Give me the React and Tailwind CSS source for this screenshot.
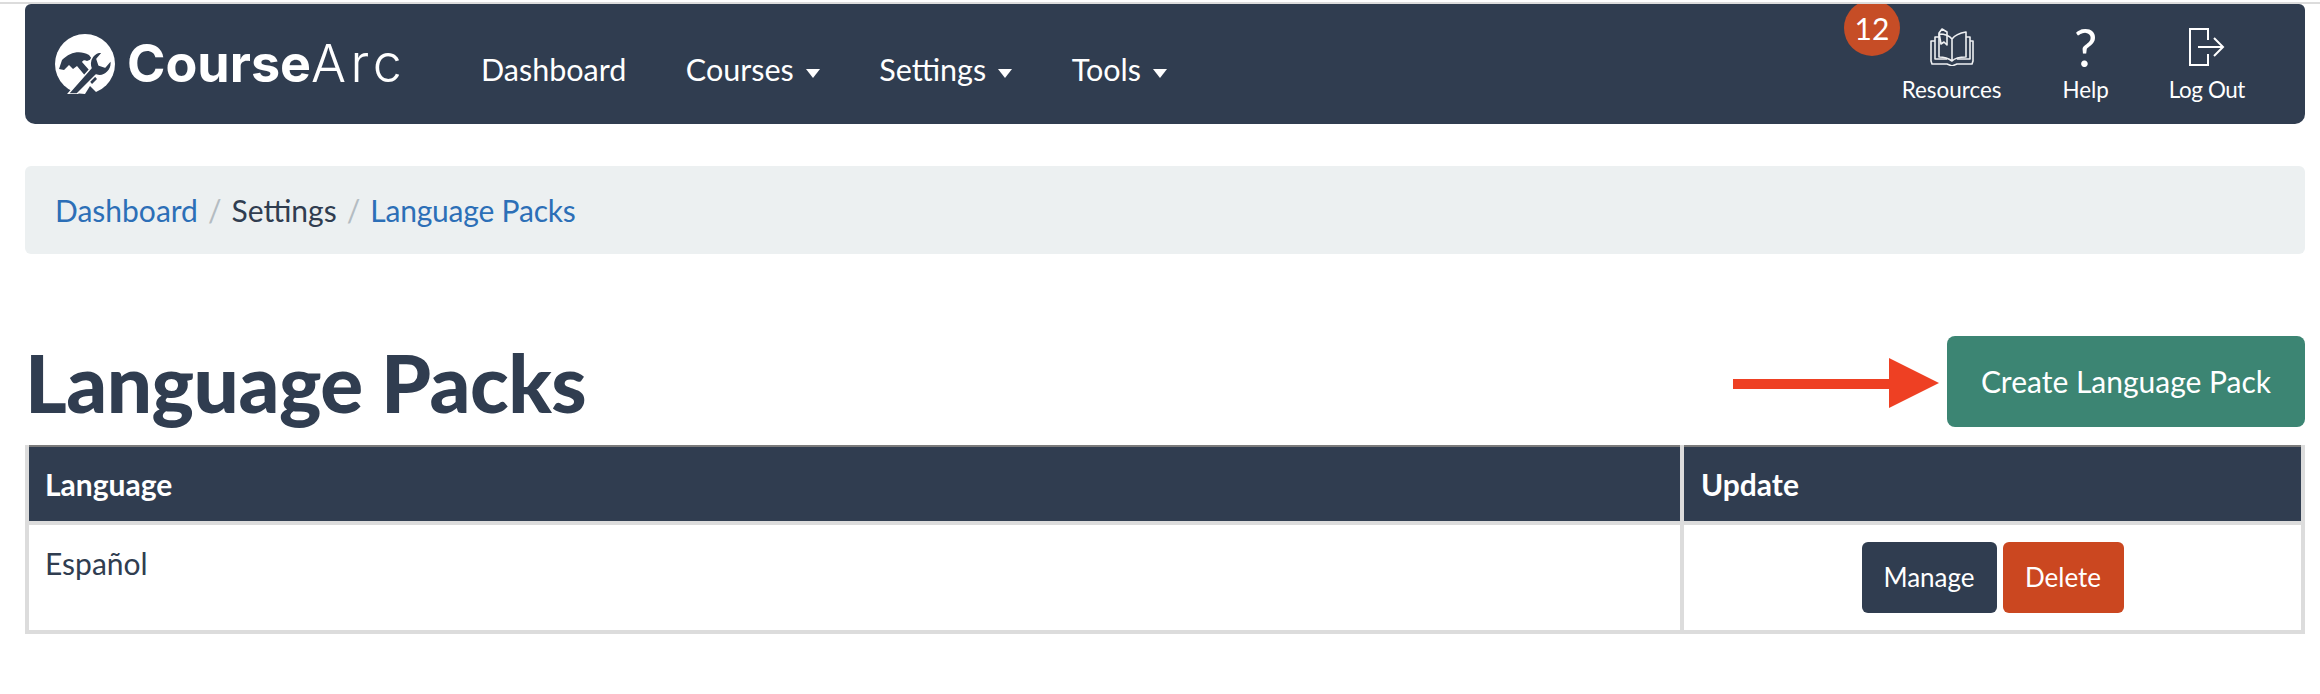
import React from "react";

const Caret = () => (
  <span className="ml-[12px] inline-block w-0 h-0 border-x-[7.5px] border-x-transparent border-t-[9px] border-t-white align-middle" />
);

const LogoMark = () => (
  <svg width="60" height="60" viewBox="0 0 60 60" className="shrink-0">
    <circle cx="30" cy="30" r="30" fill="#fff" />
    {/* hammer */}
    <path d="M4 35l3-9c8-8 18-10 27-5l3 4-5 2c-2-1-4-1-5 1l15 17-5 5-15-18-4 3-4-4-5 5z" fill="#303d50" />
    {/* wrench, white edge keeps it apart from the hammer handle */}
    <path d="M13 60l23-26c-3-8 3-17 12-16l-6 7 2 6 6 2 6-7c2 9-6 18-15 15L22 60z" fill="#303d50" stroke="#fff" strokeWidth="1.5" strokeLinejoin="round" />
    <path d="M30 60l5-8 8 8z" fill="#303d50" />
  </svg>
);

const BookIcon = () => (
  <svg width="46" height="38" viewBox="0 0 46 38" fill="none" stroke="#eef0f2" strokeWidth="1.6" strokeLinejoin="round">
    <path d="M23 33c-4-3-8-4-13-4V6c5 0 10 1 13 5 3-4 8-6 14-7v25c-6 0-11 1-14 4zM23 11v22" />
    <path d="M10 9H6v22h12M37 9h4v22H28" />
    <path d="M6 13H2v20l1 3h15l5 2 5-2h15l1-3V13h-3" />
    <path d="M10 5l3-4 5 3v13l-3-3-3 2z" />
  </svg>
);

const LogoutIcon = () => (
  <svg width="36" height="38" viewBox="0 0 36 38" fill="none" stroke="#fff" strokeWidth="2">
    <path d="M19 12V1H1v36h18V26" />
    <path d="M9 19h25M25 10l9 9-9 9" />
  </svg>
);

const ToolLink = ({ icon, label, className, labelClass }) => (
  <a className={`flex flex-col items-center ${className}`}>
    <span className="h-[38px] flex items-center">{icon}</span>
    <span className={`text-[22.4px] leading-[28px] mt-[10px] text-white ${labelClass}`}>{label}</span>
  </a>
);

const App = () => {
  return (
    <div className="min-h-[694px] bg-white pt-[2px] font-['Lato','Liberation_Sans',sans-serif] text-[#303d50]">
      <div className="h-[2px] bg-[#dcdcdc]" />
      <div className="pl-[25px] pr-[15px]">
        <nav className="relative h-[120px] bg-[#303d50] rounded-b-[10px] rounded-t-[6px] overflow-hidden flex items-center pl-[30px] text-white">
          <div className="flex items-center w-[346px] shrink-0">
            <LogoMark />
            <span className="ml-[12px] text-[52px] font-['Inter','Liberation_Sans',sans-serif] whitespace-nowrap">
              <span className="font-bold">Course</span>
              <span className="font-light tracking-[4.5px]">Arc</span>
            </span>
          </div>
          <ul className="flex items-center ml-[80px] mt-[12px] text-[30.5px] gap-[59.5px]">
            <li>Dashboard</li>
            <li>Courses<Caret /></li>
            <li>Settings<Caret /></li>
            <li>Tools<Caret /></li>
          </ul>
          <div className="ml-auto flex items-start pr-[60px] pt-[4px]">
            <ToolLink icon={<BookIcon />} label="Resources" />
            <ToolLink className="ml-[61px]" icon={<span className="text-[52px] leading-none">?</span>} label="Help" />
            <ToolLink className="ml-[60px]" labelClass="tracking-[-0.4px]" icon={<LogoutIcon />} label="Log Out" />
          </div>
          <span className="absolute left-[1819px] top-[-4px] w-[56px] h-[56px] rounded-full bg-[#c64d26] flex items-center justify-center text-[30px] text-white">12</span>
        </nav>

        <div className="mt-[42px] h-[88px] bg-[#ecf0f1] rounded-[6px] flex items-center px-[30px] text-[30px]">
          <a className="text-[#2c6fb7]">Dashboard</a>
          <span className="mx-[10px] text-[#b4bcc2]">/</span>
          <span>Settings</span>
          <span className="mx-[10px] text-[#b4bcc2]">/</span>
          <a className="text-[#2c6fb7] tracking-[-0.2px]">Language Packs</a>
        </div>

        <div className="mt-[82px] flex items-center justify-between h-[91px]">
          <h1 className="text-[80px] font-black tracking-[-0.5px] leading-none">Language Packs</h1>
          <div className="relative">
            <svg width="206" height="50" viewBox="0 0 206 50" className="absolute right-[366px] top-[22px]">
              <path d="M0 21h156V0l50 25-50 25V31H0z" fill="#ee4023" />
            </svg>
            <button className="block w-[358px] h-[91px] bg-[#3c8573] rounded-[8px] text-white text-[30px]">Create Language Pack</button>
          </div>
        </div>

        <table className="mt-[18px] w-full border-collapse table-fixed text-[30px]">
          <thead>
            <tr className="bg-[#303d50] text-white text-left">
              <th className="h-[77px] px-[16px] font-bold border-4 border-[#dcdcdc] border-t-[#7b7b7b] border-t-2">Language</th>
              <th className="w-[621px] px-[17px] font-bold border-4 border-[#dcdcdc] border-t-[#7b7b7b] border-t-2">Update</th>
            </tr>
          </thead>
          <tbody>
            <tr>
              <td className="h-[109px] px-[16px] pt-[16px] align-top border-4 border-[#dcdcdc]">Español</td>
              <td className="text-center align-middle border-4 border-[#dcdcdc]">
                <button className="h-[71px] w-[135px] bg-[#303d50] text-white rounded-[6px] text-[26px]">Manage</button>
                <button className="ml-[6px] h-[71px] w-[121px] bg-[#cb4720] text-white rounded-[6px] text-[26px]">Delete</button>
              </td>
            </tr>
          </tbody>
        </table>
      </div>
    </div>
  );
};

export default App;
